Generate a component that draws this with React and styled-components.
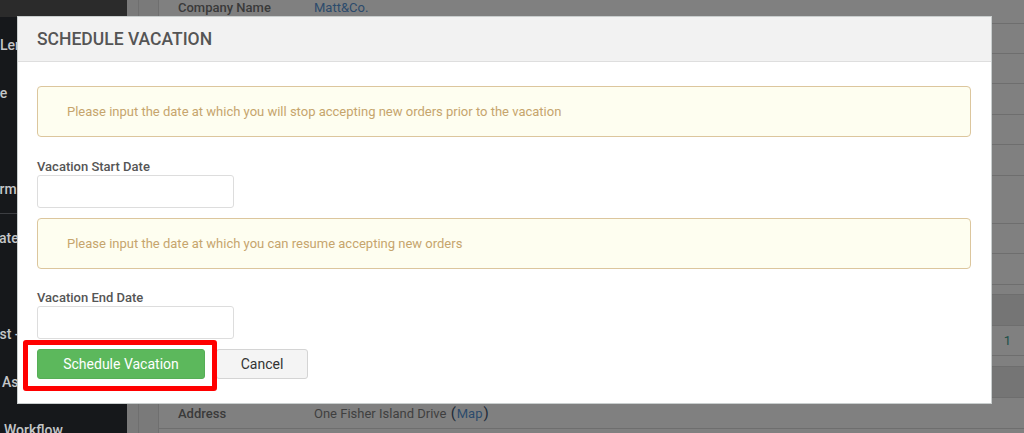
import React from 'react';
import styled, { createGlobalStyle, css } from 'styled-components';

const GlobalStyle = createGlobalStyle`
    html, body {
        margin: 0;
        padding: 0;
        overflow: hidden;
    }
    body {
        font-family: Roboto, "Liberation Sans", Arial, sans-serif;
    }
    * {
        box-sizing: border-box;
    }
`;

const Page = styled.div`
    display: flex;
    width: 1024px;
    height: 433px;
    overflow: hidden;
    background-color: #808080;
`;

/* dimmed page behind the dialog */

const Sidebar = styled.nav`
    display: flex;
    flex-direction: column;
    width: 127px;
    flex-shrink: 0;
    background-color: #16181b;
    overflow: hidden;
`;

const SideTop = styled.div`
    height: 17px;
    flex-shrink: 0;
    background-color: #2b2b2b;
`;

const SideList = styled.ul`
    list-style: none;
    margin: 0;
    padding: 4px 0 0 0;
    flex-shrink: 0;
`;

const SideItem = styled.li`
    height: 48px;
    display: flex;
    align-items: center;
    white-space: nowrap;
    font-size: 14px;
    font-weight: 500;
    color: #c4c6c8;
`;

const SideText = styled.span`
    margin-left: ${(props) => props.indent || 0}px;
`;

const SideDivider = styled.li`
    height: 1px;
    background-color: #3c3e42;
`;

const Gutter = styled.div`
    width: ${(props) => props.w}px;
    flex-shrink: 0;
    background-color: #7a7a7a;
    border-right: 1px solid #6f6f6f;
`;

const Content = styled.div`
    flex: 1;
    margin-top: -8px;
    display: flex;
    flex-direction: column;
`;

const Row = styled.div`
    display: flex;
    align-items: center;
    height: ${(props) => props.h}px;
    flex-shrink: 0;
    padding-left: 19px;
    border-bottom: 1px solid #6e6e6e;
    font-size: 13px;
    ${(props) => props.band &&
    css`
        background-color: #757575;
    `}
`;

const RowLabel = styled.div`
    width: 136px;
    font-weight: 500;
    color: #3a3a3a;
`;

const RowValue = styled.div`
    flex: 1;
    color: #3f3f3f;
`;

const Link = styled.span`
    color: #2c4b6c;
`;

const Paren = styled.span`
    font-size: 15px;
    color: #1e2a38;
    margin: 0 1px;
`;

const Count = styled.div`
    margin-left: auto;
    padding-right: 13px;
    color: #1b4f48;
    font-size: 13px;
`;

/* dialog */

const Modal = styled.div`
    position: fixed;
    left: 17px;
    top: 16px;
    width: 975px;
    display: flex;
    flex-direction: column;
    background-color: #ffffff;
    border: 1px solid #c9cece;
`;

const ModalHeader = styled.div`
    height: 45px;
    display: flex;
    align-items: center;
    padding-left: 19px;
    background-color: #f2f2f2;
    border-bottom: 1px solid #dedede;
`;

const ModalTitle = styled.h3`
    margin: 0;
    font-size: 17.5px;
    font-weight: 500;
    color: #555555;
`;

const ModalBody = styled.div`
    display: flex;
    flex-direction: column;
    padding: 24px 20px 24px 19px;
`;

const Alert = styled.div`
    height: 51px;
    display: flex;
    align-items: center;
    padding: 0 29px;
    margin-top: ${(props) => props.mt || 0}px;
    background-color: #fefef0;
    border: 1px solid #dcc69d;
    border-radius: 4px;
    font-size: 13px;
    color: #c6a56d;
`;

const Label = styled.label`
    display: block;
    margin-top: ${(props) => props.mt}px;
    height: 17px;
    line-height: 17px;
    font-size: 13px;
    font-weight: 500;
    color: #555555;
`;

const DateInput = styled.input`
    width: 197px;
    height: 33px;
    padding: 0 8px;
    border: 1px solid #dddddd;
    border-radius: 3px;
    background: #ffffff;
    outline: none;
`;

const Actions = styled.div`
    position: relative;
    display: flex;
    gap: 11px;
    margin-top: 10px;
`;

const Button = styled.button`
    height: 30px;
    width: ${(props) => props.w}px;
    font-family: inherit;
    font-size: 14px;
    border-radius: 3px;
    cursor: pointer;
    ${(props) => props.primary
        ? css`
            background-color: #5cb85c;
            border: 1px solid #56ae56;
            color: #ffffff;
        `
        : css`
            background-color: #f4f4f4;
            border: 1px solid #d4d4d4;
            color: #333333;
        `}
`;

const Highlight = styled.div`
    position: absolute;
    left: -14px;
    top: -9px;
    width: 194px;
    height: 51px;
    border: 5px solid #ff0000;
    border-radius: 3px;
    pointer-events: none;
`;

const rows = [
    { h: 32, label: 'Company Name', value: <Link>Matt&amp;Co.</Link> },
    { h: 30 },
    { h: 30 },
    { h: 31 },
    { h: 30 },
    { h: 31 },
    { h: 48 },
    { h: 30 },
    { h: 31 },
    { h: 10 },
    { h: 31, band: true },
    { h: 30, count: '1' },
    { h: 11 },
    { h: 31, band: true },
    {
        h: 31,
        label: 'Address',
        value: (
            <>
                One Fisher Island Drive <Paren>(</Paren><Link>Map</Link><Paren>)</Paren>
            </>
        ),
    },
];

const App = () => {
    return (
        <>
            <GlobalStyle />
            <Page>
                <Sidebar>
                    <SideTop />
                    <SideList>
                        <SideItem><SideText>Lending</SideText></SideItem>
                        <SideItem><SideText indent={-26}>Store</SideText></SideItem>
                        <SideItem />
                        <SideItem><SideText indent={-16}>Form</SideText></SideItem>
                        <SideDivider />
                        <SideItem><SideText indent={-40}>Template</SideText></SideItem>
                        <SideItem />
                        <SideItem><SideText indent={-40}>Request - Quote</SideText></SideItem>
                        <SideItem><SideText indent={2}>Assets</SideText></SideItem>
                        <SideItem><SideText indent={4}>Workflow</SideText></SideItem>
                    </SideList>
                </Sidebar>
                <Gutter w={12} />
                <Gutter w={20} />
                <Content>
                    {rows.map((r, i) => (
                        <Row key={i} h={r.h} band={r.band}>
                            {r.label && <RowLabel>{r.label}</RowLabel>}
                            {r.label && <RowValue>{r.value}</RowValue>}
                            {r.count && <Count>{r.count}</Count>}
                        </Row>
                    ))}
                </Content>
            </Page>

            <Modal>
                <ModalHeader>
                    <ModalTitle>SCHEDULE VACATION</ModalTitle>
                </ModalHeader>
                <ModalBody>
                    <Alert>
                        Please input the date at which you will stop accepting new orders prior to the vacation
                    </Alert>
                    <Label mt={21}>Vacation Start Date</Label>
                    <DateInput type="text" />
                    <Alert mt={10}>
                        Please input the date at which you can resume accepting new orders
                    </Alert>
                    <Label mt={20}>Vacation End Date</Label>
                    <DateInput type="text" />
                    <Actions>
                        <Button primary w={168}>Schedule Vacation</Button>
                        <Button w={92}>Cancel</Button>
                        <Highlight />
                    </Actions>
                </ModalBody>
            </Modal>
        </>
    );
};

export default App;
